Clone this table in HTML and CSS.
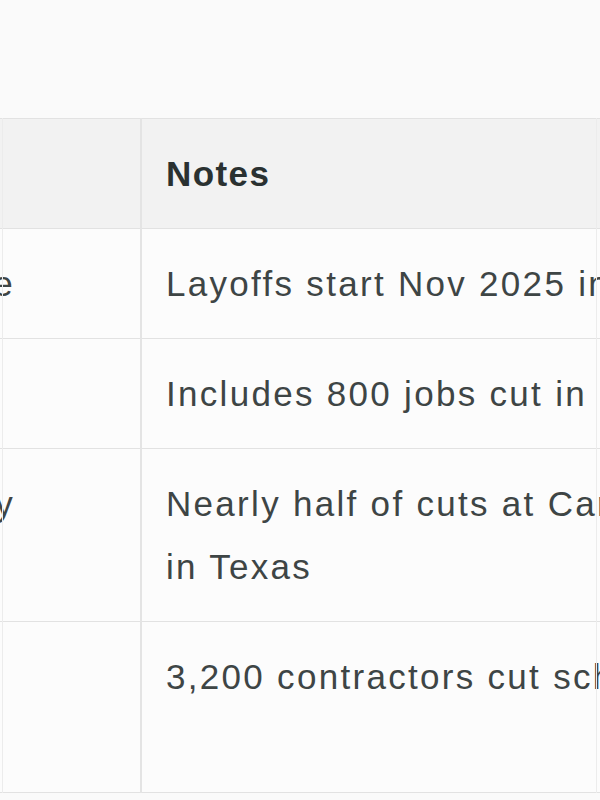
FILE: index.html
```html
<!DOCTYPE html>
<html lang="en">
<head>
<meta charset="utf-8">
<title>Layoffs table</title>
<link rel="stylesheet" href="styles.css">
</head>
<body>
<div class="page">
  <div class="table-wrap">
    <table class="data">
      <colgroup>
        <col class="col-loc">
        <col class="col-notes">
      </colgroup>
      <thead>
        <tr>
          <th><div class="clip">Location</div></th>
          <th>Notes</th>
        </tr>
      </thead>
      <tbody>
        <tr>
          <td><div class="clip">Statewide</div></td>
          <td><div class="line">Layoffs start Nov 2025 in phases</div></td>
        </tr>
        <tr>
          <td><div class="clip"></div></td>
          <td><div class="line">Includes 800 jobs cut in Seattle</div></td>
        </tr>
        <tr>
          <td><div class="clip">Company</div></td>
          <td><div class="wrap">Nearly half of cuts at Carrollton<br>in Texas</div></td>
        </tr>
        <tr class="tall">
          <td><div class="clip"></div></td>
          <td><div class="line">3,200 contractors cut scheduled</div></td>
        </tr>
      </tbody>
    </table>
  </div>
</div>
</body>
</html>
```

FILE: styles.css
```css
html, body {
  margin: 0;
  padding: 0;
  background: #fafafa;
}

body {
  width: 600px;
  height: 800px;
  overflow: hidden;
  font-family: "Liberation Sans", Arial, sans-serif;
  color: #3e4545;
}

.page {
  padding-top: 118px;
}

.table-wrap {
  position: relative;
  width: 600px;
  overflow: hidden;
}

.table-wrap::before,
.table-wrap::after {
  content: "";
  position: absolute;
  top: 0;
  bottom: 0;
  width: 1px;
  background: #ececec;
  z-index: 2;
}

.table-wrap::before { left: 2px; }
.table-wrap::after { left: 596px; }

.data {
  border-collapse: collapse;
  table-layout: fixed;
  width: 1000px;
  font-size: 35px;
  line-height: 63px;
}

.col-loc { width: 141px; }
.col-notes { width: 859px; }

.data th,
.data td {
  padding: 23px 0 23px 24px;
  border-top: 1px solid #e2e2e2;
  border-bottom: 1px solid #e2e2e2;
  text-align: left;
  vertical-align: top;
  white-space: nowrap;
}

.data th:first-child,
.data td:first-child {
  padding-left: 0;
  border-right: 2px solid #e4e4e4;
}

.data th {
  background: #f2f2f2;
  font-weight: bold;
  color: #2a3131;
  letter-spacing: 1.4px;
}

.data td {
  background: #fcfcfc;
  letter-spacing: 2.3px;
}

.clip {
  display: flex;
  justify-content: flex-end;
  overflow: hidden;
  padding-right: 125px;
  height: 63px;
}

.data th .clip {
  color: transparent;
}

.tall td {
  height: 124px;
}
```
